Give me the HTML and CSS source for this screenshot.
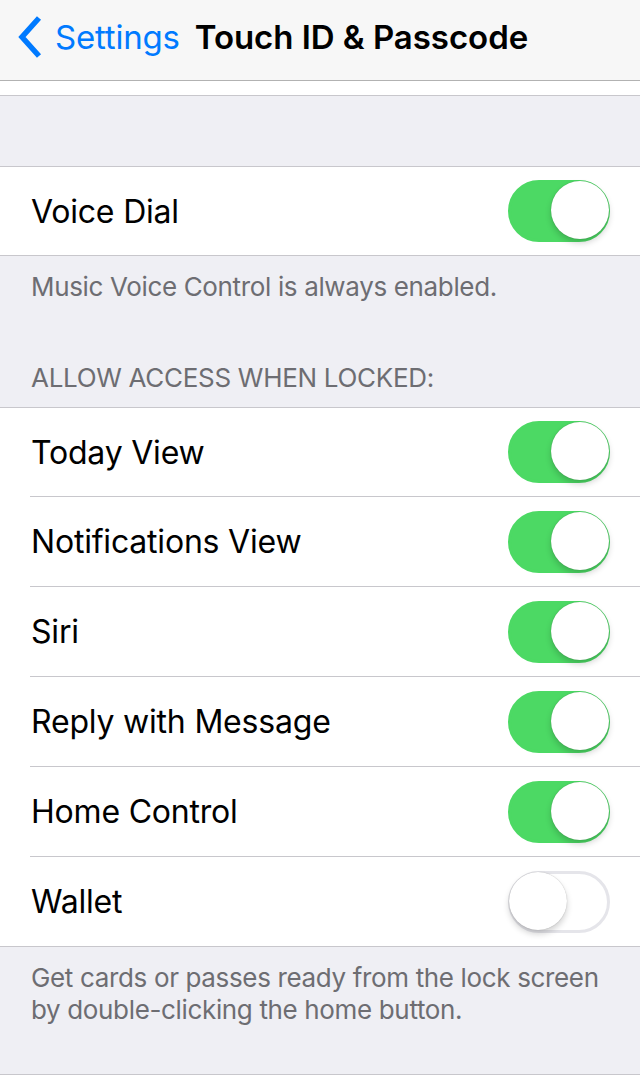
FILE: index.html
```html
<!DOCTYPE html>
<html lang="en">
<head>
  <meta charset="UTF-8">
  <meta name="viewport" content="width=device-width, initial-scale=1">
  <title>Touch ID &amp; Passcode</title>
  <link rel="stylesheet" href="styles.css">
</head>
<body>
  <header class="nav">
    <a class="back" href="#">
      <svg class="chevron" width="26" height="44" viewBox="0 0 26 44">
        <path d="M22 3 L5 22 L22 41" fill="none" stroke="#007aff" stroke-width="5.5" stroke-linecap="butt" stroke-linejoin="miter"/>
      </svg>
      <span>Settings</span>
    </a>
    <h1>Touch ID &amp; Passcode</h1>
  </header>

  <div class="strip"></div>
  <div class="spacer"></div>

  <div class="group">
    <div class="row"><span>Voice Dial</span><span class="switch on"></span></div>
  </div>
  <p class="note">Music Voice Control is always enabled.</p>

  <p class="caption">ALLOW ACCESS WHEN LOCKED:</p>
  <div class="group">
    <div class="row"><span>Today View</span><span class="switch on"></span></div>
    <div class="row"><span>Notifications View</span><span class="switch on"></span></div>
    <div class="row"><span>Siri</span><span class="switch on"></span></div>
    <div class="row"><span>Reply with Message</span><span class="switch on"></span></div>
    <div class="row"><span>Home Control</span><span class="switch on"></span></div>
    <div class="row"><span>Wallet</span><span class="switch"></span></div>
  </div>
  <p class="note tall">Get cards or passes ready from the lock screen<br>by double-clicking the home button.</p>

  <div class="strip end"></div>
</body>
</html>
```

FILE: styles.css
```css
* { box-sizing: border-box; }
body { margin: 0; background: #efeff4; font-family: Inter, "Noto Sans", sans-serif; color: #000; }

.nav { height: 81px; background: #f7f7f7; border-bottom: 1px solid #b2b2b2; display: flex; align-items: center; padding: 0 0 6px 17px; }
.back { display: flex; align-items: center; color: #007aff; text-decoration: none; font-size: 33px; letter-spacing: -0.2px; }
.chevron { margin-right: 12px; }
.nav h1 { margin: 0 0 0 15px; font-size: 33px; font-weight: 600; letter-spacing: -0.05px; }

.strip { height: 15px; background: #fff; border-bottom: 1px solid #c8c7cc; }
.strip.end { border-bottom: none; border-top: 1px solid #c8c7cc; height: 14px; }
.spacer { height: 70px; }

.group { background: #fff; border-top: 1px solid #c8c7cc; border-bottom: 1px solid #c8c7cc; }
.row { height: 88px; display: flex; align-items: center; justify-content: space-between; padding: 0 30px 0 31px; font-size: 32px; letter-spacing: -0.2px; }
.row + .row { height: 90px; border-top: 1px solid #c8c7cc; margin-left: 30px; padding-left: 1px; }

.switch { width: 102px; height: 62px; border-radius: 31px; border: 3px solid #e5e5ea; background: #fff; position: relative; flex: none; }
.switch::after { content: ""; position: absolute; top: -2px; left: -2px; width: 58px; height: 58px; border-radius: 50%; background: #fff; box-shadow: 0 4px 6px rgba(0,0,0,0.18), 0 0 1px rgba(0,0,0,0.3); }
.switch.on { background: #4cd964; border-color: #4cd964; }
.switch.on::after { left: auto; right: -2px; }

.note { margin: 0; padding: 15px 30px 0 31px; height: 106px; font-size: 26px; line-height: 32px; color: #6d6d72; letter-spacing: -0.35px; }
.note.tall { height: 127px; }
.caption { margin: 0; padding: 0 31px 13px; font-size: 26px; line-height: 32px; color: #6d6d72; letter-spacing: -0.3px; }
```
